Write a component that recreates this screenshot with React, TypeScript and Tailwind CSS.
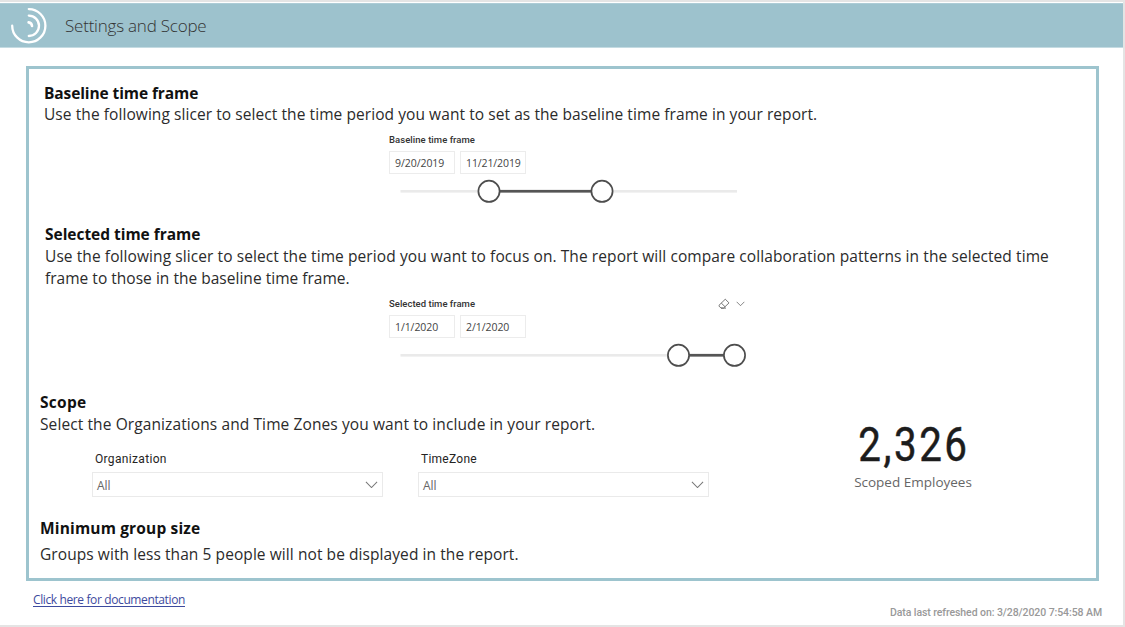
type SliderProps = { start: number; end: number; trackEnd: number };

function Logo() {
  return (
    <svg width="40" height="40" viewBox="0 0 40 40" fill="none" stroke="#fff" strokeWidth="2.3" strokeLinecap="round">
      <path d="M3.2 19.7A16.6 16.6 0 1 0 19.8 3.1" />
      <path d="M19.8 9.6a10.2 10.2 0 0 1 0 20.4" />
      <path d="M19.6 16.4a3.9 3.9 0 0 1 3.4 3.6" strokeWidth="2.6" />
    </svg>
  );
}

function Chevron({ width, color }: { width: number; color: string }) {
  return (
    <svg width={width} height={width / 2 + 1} viewBox="0 0 14 8" fill="none" stroke={color} strokeWidth="1.1">
      <path d="M1 1l6 6 6-6" />
    </svg>
  );
}

function Eraser() {
  return (
    <svg width="12" height="12" viewBox="0 0 12 12" fill="none" stroke="#666" strokeWidth="0.9" strokeLinejoin="round">
      <path d="M7.3 1.2L11 4.9 5.6 10.1H3L1 8.1V7.3z" />
      <path d="M3.3 5.1L7.1 8.8M3 10.1h5" />
    </svg>
  );
}

function Slider({ start, end, trackEnd }: SliderProps) {
  return (
    <svg className="block" width="360" height="26" viewBox="0 0 360 26">
      <rect x="11.5" y="12" width={trackEnd - 11.5} height="2.6" fill="#eaeaea" />
      <rect x={start} y="11.9" width={end - start} height="2.7" fill="#555" />
      <circle cx={start} cy="13.3" r="10.6" fill="#fff" stroke="#4d4d4d" strokeWidth="1.7" />
      <circle cx={end} cy="13.3" r="10.6" fill="#fff" stroke="#4d4d4d" strokeWidth="1.7" />
    </svg>
  );
}

function DateBox({ value, spacing }: { value: string; spacing: string }) {
  return (
    <div className={`flex h-[23px] w-[66px] items-center border border-[#ececec] pl-[5px] pt-px text-[10.5px] text-[#444] ${spacing}`}>
      {value}
    </div>
  );
}

function Dropdown({ label, spacing }: { label: string; spacing: string }) {
  return (
    <div className="w-[291px]">
      <div className={`h-[21px] pl-[3px] font-[Roboto,sans-serif] text-[12px] leading-[16px] text-[#252423] ${spacing}`}>{label}</div>
      <div className="flex h-[25px] items-center justify-between border border-[#eaeaea] pr-1 pl-1 text-[12px] text-[#666]">
        <span className="pt-[2px]">All</span>
        <Chevron width={13} color="#777" />
      </div>
    </div>
  );
}

export default function App() {
  return (
    <div className="flex h-[627px] w-[1125px] flex-col overflow-hidden border-t-2 border-r-2 border-b-2 border-[#e4e4e4] bg-white font-['Open_Sans',sans-serif] whitespace-nowrap">
      <header className="mt-px flex h-[45px] shrink-0 items-center border-y border-t-[#adccd6] border-b-[#c4dbe2] bg-[#9dc2cd] pl-[9px]">
        <Logo />
        <h1 className="pl-[16px] text-[17px] font-light tracking-[-0.22px] text-[#333]">Settings and Scope</h1>
      </header>

      <main className="mt-[18px] ml-[26px] h-[515px] w-[1073px] shrink-0 border-3 border-[#9dc4ce] text-[15.5px] leading-[22px] text-[#2b2b2b]">
        <section className="pt-[13px] pl-[15px]">
          <h2 className="h-[21px] font-bold tracking-[-0.1px] text-[#111]">Baseline time frame</h2>
          <p className="tracking-[0.072px]">
            Use the following slicer to select the time period you want to set as the baseline time frame in your report.
          </p>
          <div className="ml-[345px] pt-[8px]">
            <div className="h-[18px] font-[Roboto,sans-serif] text-[9.5px] leading-[14px] font-medium tracking-[0.05px] text-[#333]">
              Baseline time frame
            </div>
            <div className="flex gap-[5px]">
              <DateBox value="9/20/2019" spacing="tracking-[-0.05px]" />
              <DateBox value="11/21/2019" spacing="tracking-[-0.1px]" />
            </div>
            <div className="pt-[4px]">
              <Slider start={100} end={213} trackEnd={348} />
            </div>
          </div>
        </section>

        <section className="pt-[19px] pl-[16px]">
          <h2 className="font-bold tracking-[-0.03px] text-[#111]">Selected time frame</h2>
          <p className="tracking-[0.085px]">
            Use the following slicer to select the time period you want to focus on. The report will compare collaboration patterns in the selected time
            <br />
            <span className="tracking-[0.02px]">frame to those in the baseline time frame.</span>
          </p>
          <div className="ml-[344px] pt-[8px]">
            <div className="flex h-[18px] w-[356px] justify-between font-[Roboto,sans-serif] text-[9.5px] leading-[14px] font-medium tracking-[0.02px] text-[#333]">
              <span>Selected time frame</span>
              <span className="flex h-[14px] items-center gap-[6px]">
                <Eraser />
                <Chevron width={9} color="#555" />
              </span>
            </div>
            <div className="flex gap-[5px]">
              <DateBox value="1/1/2020" spacing="tracking-[-0.08px]" />
              <DateBox value="2/1/2020" spacing="tracking-[-0.05px]" />
            </div>
            <div className="pt-[4px]">
              <Slider start={289.5} end={345.5} trackEnd={345} />
            </div>
          </div>
        </section>

        <section className="flex pt-[23px] pl-[11px]">
          <div className="w-[814px]">
            <h2 className="font-bold tracking-[0.3px] text-[#111]">Scope</h2>
            <p className="tracking-[0.1px]">Select the Organizations and Time Zones you want to include in your report.</p>
            <div className="flex gap-[35px] pt-[16px] pl-[52px]">
              <Dropdown label="Organization" spacing="tracking-[0.33px]" />
              <Dropdown label="TimeZone" spacing="tracking-[0.25px]" />
            </div>
          </div>
          <div className="flex w-[118px] flex-col items-center pt-[30px]">
            <div className="scale-x-[0.84] pl-[3px] font-[Roboto,sans-serif] text-[48px] leading-[48px] tracking-[3px] text-[#1c1c1c] [-webkit-text-stroke:0.5px_#1c1c1c]">
              2,326
            </div>
            <div className="pt-[2px] text-[13.5px] leading-[22px] text-[#666]">Scoped Employees</div>
          </div>
        </section>

        <section className="pt-[20px] pl-[11px]">
          <h2 className="font-bold tracking-[0.16px] text-[#111]">Minimum group size</h2>
          <p className="pt-[4px] tracking-[0.075px]">Groups with less than 5 people will not be displayed in the report.</p>
        </section>
      </main>

      <footer className="flex justify-between pt-[10px] pr-[21px] pl-[33px]">
        <a href="#" className="text-[12px] leading-[18px] tracking-[-0.38px] text-[#3d4a9e] underline underline-offset-2">
          Click here for documentation
        </a>
        <span className="pt-[14px] font-[Roboto,sans-serif] text-[10.5px] leading-[16px] font-medium tracking-[-0.08px] text-[#999]">
          Data last refreshed on: 3/28/2020 7:54:58 AM
        </span>
      </footer>
    </div>
  );
}
